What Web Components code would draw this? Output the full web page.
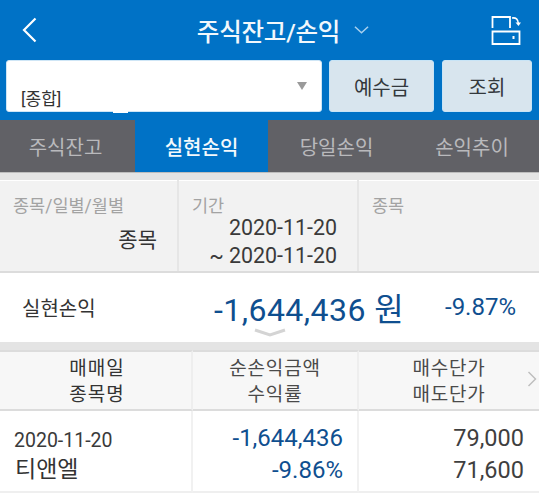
<!DOCTYPE html>
<html lang="ko">
<head>
<meta charset="utf-8">
<style>
  html, body { margin: 0; padding: 0; background: #fff; }
  body { width: 539px; height: 504px; overflow: hidden; font-family: Roboto, "Noto Sans CJK KR", sans-serif; }
</style>
</head>
<body>
<app-header></app-header>
<search-bar></search-bar>
<tab-bar></tab-bar>
<filter-panel></filter-panel>
<profit-summary></profit-summary>
<profit-table></profit-table>

<script>
class AppHeader extends HTMLElement {
  constructor() {
    super();
    this.shadowDOM = this.attachShadow({mode: 'open'});
  }
  connectedCallback() {
    this.shadowDOM.innerHTML = `
      <style>
        :host { display: flex; height: 60px; background: #0072c6; color: #fff; align-items: center; justify-content: space-between; padding: 0 18px 0 22px; box-sizing: border-box; }
        svg { display: block; fill: none; stroke: #fff; }
        .title { display: flex; align-items: center; gap: 14px; font-size: 24.500px; font-weight: 500; letter-spacing: -0.2px; color: #f2f8fc; margin-left: 38px; }
      </style>
      <svg width="15" height="26" viewBox="0 0 15 26" stroke-width="2.2"><path d="M13.5 1.5 L2 13 L13.5 24.5"/></svg>
      <div class="title"><span>주식잔고/손익</span>
        <svg width="15" height="10" viewBox="0 0 16 10" stroke-width="1.6" style="stroke:#a8d0ee"><path d="M1 1.5 L8 8 L15 1.5"/></svg>
      </div>
      <svg width="30" height="30" viewBox="0 0 30 30" stroke-width="1.8">
        <path d="M1.500 13 V2 H19 V13 M1.500 29 V16.500 H28.500 V29 Z"/>
        <path d="M21 3 C25 2.500 27 4 27.500 9" stroke-width="1.600"/>
        <path d="M24.500 7.500 H30 L27.500 11 Z" fill="#fff" stroke="none"/>
        <path d="M22.500 21 V24" stroke-width="2"/>
      </svg>
    `;
  }
}

class SearchBar extends HTMLElement {
  constructor() {
    super();
    this.shadowDOM = this.attachShadow({mode: 'open'});
  }
  connectedCallback() {
    this.shadowDOM.innerHTML = `
      <style>
        :host { display: flex; height: 60px; background: #0072c6; padding: 0 6px 8px 6px; box-sizing: border-box; gap: 7px; }
        .select { width: 316px; height: 52px; box-sizing: border-box; background: #fff; border-radius: 3px; border: 1px solid #cfe6f6; position: relative; color: #333; font-size: 17px; display: flex; align-items: flex-end; padding: 0 0 0 14px; line-height: 24px; }
        .select::after { content: ''; position: absolute; right: 14px; top: 21px; border-left: 5px solid transparent; border-right: 5px solid transparent; border-top: 8px solid #9a9a9a; }
        .select::before { content: ''; position: absolute; left: 106px; bottom: -2px; width: 15px; height: 2px; background: #fff; }
        button { height: 52px; background: #d8e5ee; border: 1px solid #c8e4f6; border-radius: 3px; font: 400 20px Roboto, "Noto Sans CJK KR", sans-serif; color: #33383c; padding: 0; }
        .deposit { width: 105px; }
        .query { width: 90px; margin-left: 1px; }
      </style>
      <div class="select">[종합]</div>
      <button class="deposit">예수금</button>
      <button class="query">조회</button>
    `;
  }
}

class TabBar extends HTMLElement {
  constructor() {
    super();
    this.shadowDOM = this.attachShadow({mode: 'open'});
  }
  connectedCallback() {
    this.shadowDOM.innerHTML = `
      <style>
        :host { display: grid; grid-template-columns: 135px 133px 135px 136px; height: 52px; background: #616166; border-bottom: 1px solid #bdbdbd; box-sizing: content-box; }
        div { display: flex; align-items: center; justify-content: center; font-size: 20px; color: #b9b9bc; }
        div:nth-of-type(1) { padding-right: 4px; }
        div:nth-of-type(n+3) { padding-left: 2px; }
        .on { background: #0072c6; color: #f4f9fc; font-weight: 500; }
      </style>
      <div>주식잔고</div>
      <div class="on">실현손익</div>
      <div>당일손익</div>
      <div>손익추이</div>
    `;
  }
}

class FilterPanel extends HTMLElement {
  constructor() {
    super();
    this.shadowDOM = this.attachShadow({mode: 'open'});
  }
  connectedCallback() {
    this.shadowDOM.innerHTML = `
      <style>
        :host { display: grid; grid-template-columns: 179px 180px 180px; height: 91px; background: #f2f2f2; border-top: 7px solid #e4e4e4; border-bottom: 2px solid #dcdcdc; box-sizing: content-box; box-shadow: inset 0 1px 0 #fff; }
        .cell { border-right: 2px solid #e6e6e6; box-sizing: border-box; padding: 15px 12px 0 13px; }
        .cell:last-child { border-right: 0; }
        .label { font-size: 17.500px; line-height: 22px; color: #a3a3a3; }
        .value { font-size: 21px; color: #333; text-align: right; margin-top: 6px; padding-right: 8px; }
        .dates { font-size: 21.400px; line-height: 28px; color: #3a3a3a; text-align: right; padding-right: 8px; margin-top: -3px; }
      </style>
      <div class="cell"><div class="label">종목/일별/월별</div><div class="value">종목</div></div>
      <div class="cell"><div class="label">기간</div><div class="dates">2020-11-20<br>~ 2020-11-20</div></div>
      <div class="cell"><div class="label">종목</div></div>
    `;
  }
}

class ProfitSummary extends HTMLElement {
  constructor() {
    super();
    this.shadowDOM = this.attachShadow({mode: 'open'});
  }
  connectedCallback() {
    this.shadowDOM.innerHTML = `
      <style>
        :host { display: flex; height: 69px; align-items: center; position: relative; background: #fff; color: #0f4f8f; }
        .name { font-size: 20px; color: #333; margin-left: 22px; width: 192px; }
        .amount { font-size: 32px; width: 231px; letter-spacing: 0.45px; margin-top: -1px; }
        .rate { font-size: 24px; margin-top: -1px; }
        svg { position: absolute; left: 253px; top: 55px; fill: none; stroke: #d4d4d4; stroke-width: 3; }
      </style>
      <div class="name">실현손익</div>
      <div class="amount">-1,644,436 원</div>
      <div class="rate">-9.87%</div>
      <svg width="34" height="10" viewBox="0 0 34 10"><path d="M2 2 L17 7 L32 2"/></svg>
    `;
  }
}

class ProfitTable extends HTMLElement {
  constructor() {
    super();
    this.shadowDOM = this.attachShadow({mode: 'open'});
  }
  connectedCallback() {
    this.shadowDOM.innerHTML = `
      <style>
        :host { display: grid; grid-template-columns: 193px 166px 180px; grid-template-rows: 61px 82px; border-top: 8px solid #e4e4e4; position: relative; }
        .head { background: #f7f7f7; border-top: 2px solid #dcdcdc; border-bottom: 2px solid #dcdcdc; border-right: 2px solid #eeeeee; box-sizing: border-box; display: flex; align-items: center; justify-content: center; text-align: center; font-size: 19px; line-height: 26px; color: #4a4a4a; letter-spacing: 0.8px; padding-top: 2px; }
        .head.c1 { padding: 2px 0 0 3px; letter-spacing: 1px; }
        .head.c3 { border-right: 0; padding: 2px 0 0; color: #4a4a4a; }
        .cell { box-sizing: border-box; border-right: 2px solid #f1f1f1; border-bottom: 2px solid #efefef; text-align: right; }
        .c1 { text-align: left; padding: 15px 0 0 14px; color: #333; }
        .date { font-size: 19.500px; line-height: 29px; color: #3a3a3a; }
        .stock { font-size: 23px; line-height: 29px; padding-left: 1px; }
        .nums { padding: 11px 0 0; font-size: 23.500px; line-height: 32px; }
        .c2 { color: #0f4f8f; padding-right: 14px; font-size: 24px; }
        .c3 { color: #3f3f3f; padding-right: 15px; border-right: 0; }
        svg { position: absolute; right: 2px; top: 21px; fill: none; stroke: #bdbdbd; stroke-width: 1.4; }
      </style>
      <div class="head c1">매매일<br>종목명</div>
      <div class="head">순손익금액<br>수익률</div>
      <div class="head c3">매수단가<br>매도단가</div>
      <div class="cell c1"><div class="date">2020-11-20</div><div class="stock">티앤엘</div></div>
      <div class="cell nums c2">-1,644,436<br>-9.86%</div>
      <div class="cell nums c3">79,000<br>71,600</div>
      <svg width="10" height="16" viewBox="0 0 10 16"><path d="M1.500 1 L8.500 8 L1.500 15"/></svg>
    `;
  }
}

customElements.define('app-header', AppHeader);
customElements.define('search-bar', SearchBar);
customElements.define('tab-bar', TabBar);
customElements.define('filter-panel', FilterPanel);
customElements.define('profit-summary', ProfitSummary);
customElements.define('profit-table', ProfitTable);
</script>
</body>
</html>
